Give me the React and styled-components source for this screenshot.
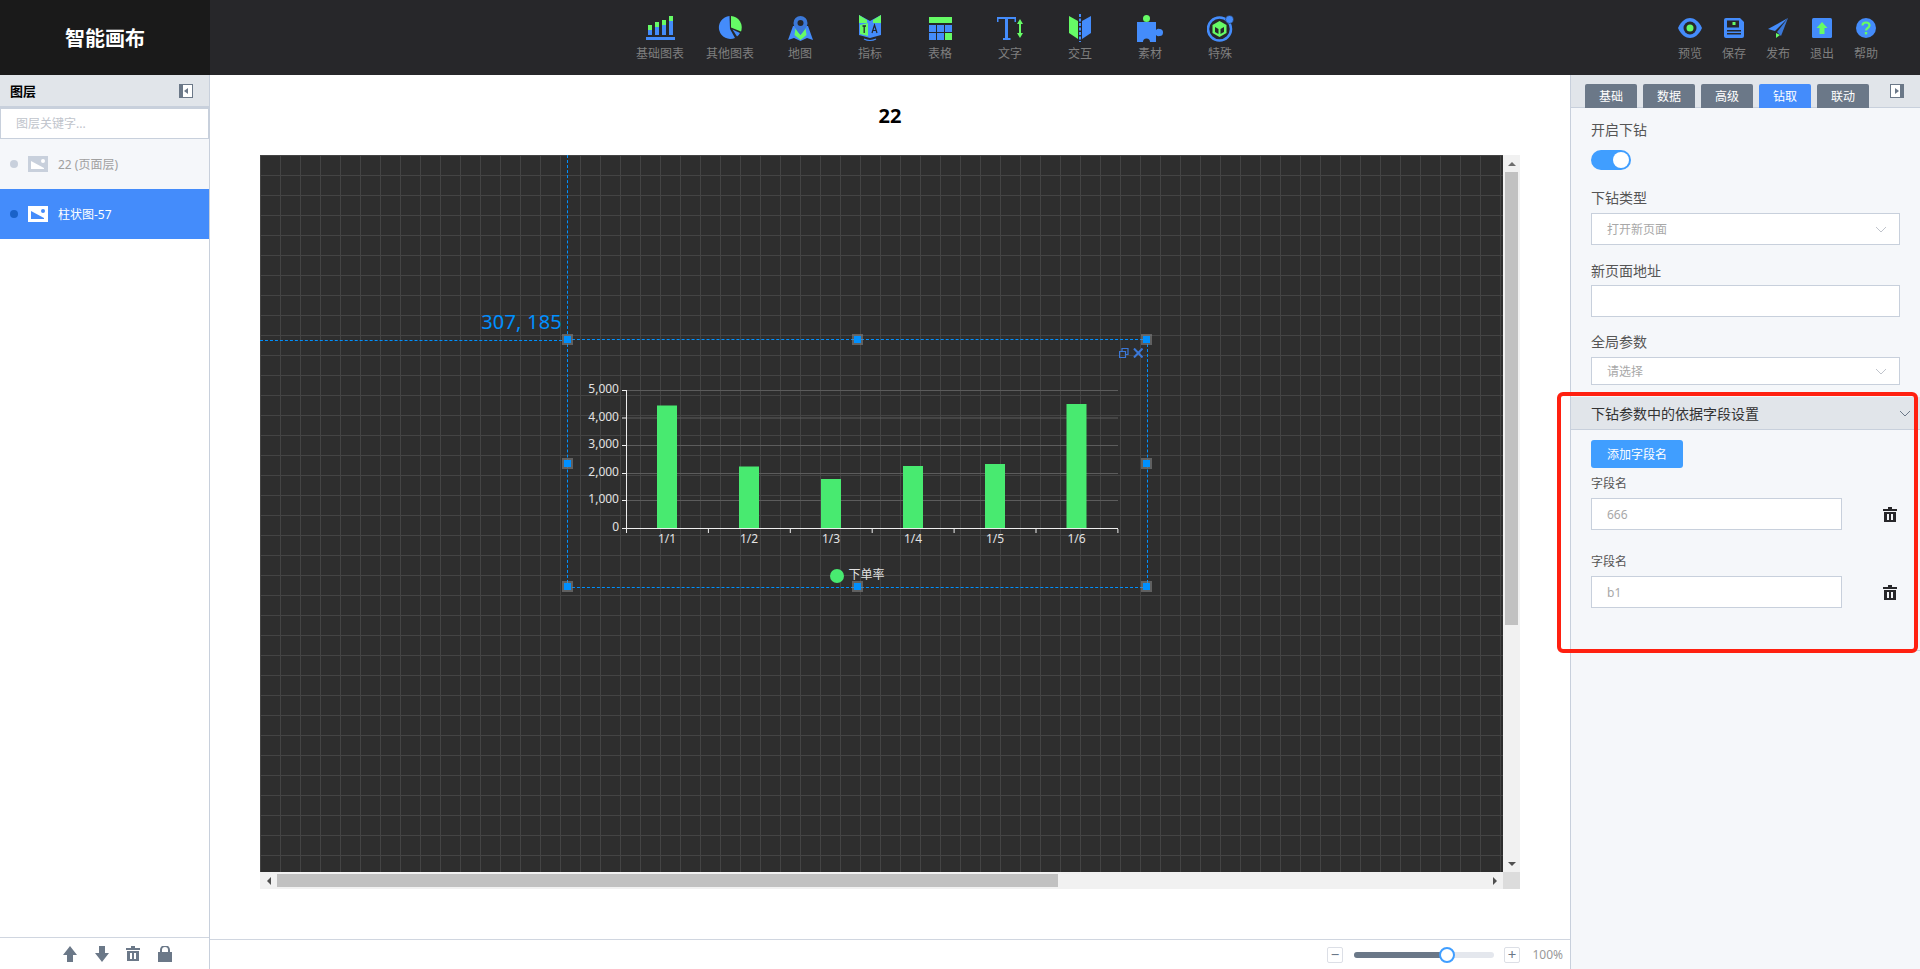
import React from "react";
import styled, { createGlobalStyle } from "styled-components";

const BLUE = "#448cfb";
const GREEN = "#66fb66";

const IconBase = () => (
  <svg width="29" height="24" viewBox="0 0 29 24">
    {[[2, 9], [9, 6], [16, 4], [23, 0]].map(([x, top]) => (
      <g key={x}>
        <rect x={x} y={top} width="4" height="5" fill={GREEN} />
        <rect x={x} y={top + 5} width="4" height={14 - top} fill={BLUE} />
      </g>
    ))}
    <rect x="0" y="21" width="29" height="3" fill={BLUE} />
  </svg>
);

const IconPie = () => (
  <svg width="24" height="24" viewBox="0 0 24 24">
    <path d="M11.5 0 A11.5 11.5 0 1 0 17 22 L12 13 Z" fill={BLUE} />
    <path d="M13 0 A11.5 11.5 0 0 1 23 15.5 L13 11.5 Z" fill={GREEN} />
    <path d="M14.5 13.5 L22 17 A11.5 11.5 0 0 1 19 20.5 Z" fill={BLUE} />
  </svg>
);

const IconMap = () => (
  <svg width="25" height="25" viewBox="0 0 25 25">
    <path d="M5 10 L0 24 L6 22 L12.5 25 L19 22 L25 24 L20 10 L17 10 L12.5 18 L8 10 Z" fill={BLUE} />
    <path d="M7.5 12 L12.5 19 L17.5 12 L18.5 19 L12.5 24 L6.5 19 Z" fill={GREEN} />
    <path d="M12.5 0 A7 7 0 0 1 19.5 7 C19.5 11 15 16 12.5 19 C10 16 5.500 11 5.500 7 A7 7 0 0 1 12.5 0 Z" fill="#3b78d8" />
    <circle cx="12.5" cy="7" r="3" fill="#27272a" />
  </svg>
);

const IconBook = () => (
  <svg width="22" height="27" viewBox="0 0 22 27">
    <path d="M0 0 L11 6 L22 0 L22 20 L11 23 L0 20 Z" fill={BLUE} />
    <path d="M0 0 L8 5 L8 8 L0 8 Z M22 0 L14 5 L14 8 L22 8 Z" fill={GREEN} />
    <path d="M1 10 L9 8 L9 21 L1 19 Z" fill={GREEN} />
    <path d="M3.500 11 H7 M5.200 11 V18" stroke="#27272a" strokeWidth="1.300" fill="none" />
    <path d="M13 18 L15.500 10 L18 18 M14 15.500 H17" stroke="#27272a" strokeWidth="1.200" fill="none" />
    <path d="M5 24 Q11 27 17 24" stroke={BLUE} strokeWidth="1.200" fill="none" />
  </svg>
);

const IconTable = () => (
  <svg width="23" height="23" viewBox="0 0 23 23">
    <rect x="0" y="0" width="23" height="6" fill={GREEN} />
    {[0, 8, 16].map((x) =>
      [8, 16].map((y) => (
        <rect key={x + "-" + y} x={x} y={y} width="7" height="7" fill={x === 16 && y === 16 ? GREEN : BLUE} />
      ))
    )}
  </svg>
);

const IconText = () => (
  <svg width="26" height="23" viewBox="0 0 26 23">
    <path d="M0 0 H19 V5 H17.500 V2 H11 V21 H13.500 V23 H6 V21 H8 V2 H1.500 V5 H0 Z" fill={BLUE} />
    <path d="M23 2 L26 7 H24 V16 H26 L23 21 L20 16 H22 V7 H20 Z" fill={GREEN} />
  </svg>
);

const IconOpen = () => (
  <svg width="22" height="28" viewBox="0 0 22 28">
    <path d="M0 2 L9 7 V25 L0 19 Z" fill={GREEN} />
    <path d="M22 2 L13 7 V25 L22 19 Z" fill={BLUE} />
    <path d="M11 0 V28" stroke={BLUE} strokeWidth="2" strokeDasharray="3 1.500" />
  </svg>
);

const IconPuzzle = () => (
  <svg width="26" height="27" viewBox="0 0 26 27">
    <circle cx="9.500" cy="3.500" r="3.500" fill={GREEN} />
    <path d="M0 7 H19 V15 A3.500 3.500 0 1 1 19 20 V27 H13 A3.500 3.500 0 1 0 6 27 H0 Z" fill={BLUE} />
    <circle cx="22.500" cy="17.500" r="3.500" fill={BLUE} />
  </svg>
);

const IconSpecial = () => (
  <svg width="27" height="27" viewBox="0 0 27 27">
    <circle cx="12.500" cy="14" r="11.500" fill="none" stroke={BLUE} strokeWidth="2.500" />
    <circle cx="22.500" cy="4.500" r="4" fill={BLUE} stroke="#27272a" strokeWidth="0.500" />
    <path d="M12.500 6 L19.500 10 V18 L12.500 22 L5.500 18 V10 Z" fill={GREEN} />
    <path d="M8 12 L11.500 14 V19 L8 17 Z M17 12 L13.500 14 V19 L17 17 Z" fill="#27272a" />
  </svg>
);

const IconEye = () => (
  <svg width="24" height="20" viewBox="0 0 24 20">
    <path d="M0 10 C3 3 8 0 12 0 C16 0 21 3 24 10 C21 17 16 20 12 20 C8 20 3 17 0 10 Z" fill={BLUE} />
    <circle cx="12" cy="10" r="6.500" fill="#27272a" />
    <circle cx="12" cy="10" r="3.500" fill={GREEN} />
  </svg>
);

const IconSave = () => (
  <svg width="20" height="20" viewBox="0 0 20 20">
    <path d="M2 0 H16 L20 4 V18 A2 2 0 0 1 18 20 H2 A2 2 0 0 1 0 18 V2 A2 2 0 0 1 2 0 Z" fill={BLUE} />
    <rect x="3" y="2.500" width="12" height="7" fill="#27272a" />
    <rect x="8.500" y="4" width="3" height="3" fill={GREEN} />
    <rect x="3" y="12" width="14" height="1.500" fill="#27272a" />
    <rect x="3" y="15" width="14" height="1.500" fill="#27272a" />
  </svg>
);

const IconSend = () => (
  <svg width="20" height="20" viewBox="0 0 20 20">
    <path d="M20 0 L0 11 L7 13 Z" fill={BLUE} />
    <path d="M20 0 L9 14 L13 18 Z" fill="#3b78d8" />
    <path d="M8 15 L12 17 L8 20 Z" fill={GREEN} />
  </svg>
);

const IconUp = () => (
  <svg width="20" height="20" viewBox="0 0 20 20">
    <rect width="20" height="20" rx="1.500" fill={BLUE} />
    <path d="M10 4 L15.500 10 H12.500 V16 H7.500 V10 H4.500 Z" fill={GREEN} />
  </svg>
);

const IconHelp = () => (
  <svg width="20" height="20" viewBox="0 0 20 20">
    <circle cx="10" cy="10" r="10" fill={BLUE} />
    <path d="M6.500 7.500 C6.500 3.500 13.500 3.500 13.500 7.500 C13.500 10 10 10 10 12.500" fill="none" stroke={GREEN} strokeWidth="2.200" />
    <rect x="8.800" y="14" width="2.400" height="2.400" fill={GREEN} />
  </svg>
);

const navItems = [
  { label: "基础图表", Icon: IconBase },
  { label: "其他图表", Icon: IconPie },
  { label: "地图", Icon: IconMap },
  { label: "指标", Icon: IconBook },
  { label: "表格", Icon: IconTable },
  { label: "文字", Icon: IconText },
  { label: "交互", Icon: IconOpen },
  { label: "素材", Icon: IconPuzzle },
  { label: "特殊", Icon: IconSpecial },
];

const actionItems = [
  { label: "预览", Icon: IconEye },
  { label: "保存", Icon: IconSave },
  { label: "发布", Icon: IconSend },
  { label: "退出", Icon: IconUp },
  { label: "帮助", Icon: IconHelp },
];

const tabs = ["基础", "数据", "高级", "钻取", "联动"];

const GRAY = "#6b7888";

const ArrowUp = ({ down }) => (
  <svg width="14" height="16" viewBox="0 0 14 16">
    <path d={down ? "M4 0 H10 V7 H14 L7 16 L0 7 H4 Z" : "M7 0 L14 9 H10 V16 H4 V9 H0 Z"} fill={GRAY} />
  </svg>
);

const Trash = ({ color = GRAY, width = 14, height = 15 }) => (
  <svg width={width} height={height} viewBox="0 0 14 15">
    <path d="M5 0 H9 V2 H14 V4 H0 V2 H5 Z" fill={color} />
    <path d="M1 5 H13 V15 H1 Z M4 7 V13 H6 V7 Z M8 7 V13 H10 V7 Z" fill={color} fillRule="evenodd" />
  </svg>
);

const Lock = () => (
  <svg width="14" height="16" viewBox="0 0 14 16">
    <path d="M0 6 H2 V4 A4 4 0 0 1 12 4 V6 H14 V16 H0 Z M4 6 H10 V4 A3 3 0 0 0 4 4 Z" fill={GRAY} fillRule="evenodd" />
  </svg>
);

const Collapse = ({ right }) => (
  <svg width="14" height="14" viewBox="0 0 14 14">
    <rect x="0.500" y="0.500" width="13" height="13" fill="#fff" stroke={GRAY} />
    <rect x={right ? 10 : 0} y="0" width="4" height="14" fill={GRAY} />
    <path d={right ? "M5 4 L9 7 L5 10 Z" : "M9 4 L5 7 L9 10 Z"} fill={GRAY} />
  </svg>
);

const PictureIcon = ({ bg, fg }) => (
  <svg width="20" height="16" viewBox="0 0 20 16">
    <rect width="20" height="16" fill={bg} />
    <path d="M3 5 L16 12 V13 H3 Z" fill={fg} />
    <circle cx="15" cy="5" r="2" fill={fg} />
  </svg>
);

const Chevron = () => (
  <svg width="12" height="7" viewBox="0 0 12 7">
    <path d="M1 1 L6 6 L11 1" fill="none" stroke="#c0c4cc" strokeWidth="1" />
  </svg>
);

// chart coordinates are relative to the selection box
const yTicks = [
  { label: "5,000", y: 51 },
  { label: "4,000", y: 78.5 },
  { label: "3,000", y: 106 },
  { label: "2,000", y: 134 },
  { label: "1,000", y: 161 },
  { label: "0", y: 189 },
];

const bars = [
  { label: "1/1", x: 100, top: 66.500 },
  { label: "1/2", x: 182, top: 127.500 },
  { label: "1/3", x: 264, top: 140 },
  { label: "1/4", x: 346, top: 127 },
  { label: "1/5", x: 428, top: 125 },
  { label: "1/6", x: 509.500, top: 65 },
];

function BarChart() {
  return (
    <ChartSvg width="581" height="249" viewBox="0 0 581 249">
      {yTicks.slice(0, 5).map((t) => (
        <line key={t.label} x1="60" x2="551" y1={t.y + 0.5} y2={t.y + 0.5} stroke="#5c5c5c" />
      ))}
      {yTicks.map((t) => (
        <g key={t.label}>
          <line x1="55" x2="60" y1={t.y + 0.5} y2={t.y + 0.5} stroke="#eee" />
          <text x="52" y={t.y + 3} textAnchor="end" fontSize="12" fill="#e2e2e2">{t.label}</text>
        </g>
      ))}
      {bars.map((b) => (
        <g key={b.label}>
          <rect x={b.x - 10} y={b.top} width="20" height={189 - b.top} fill="#48ea70" />
          <text x={b.x} y="204" textAnchor="middle" fontSize="12" fill="#e2e2e2">{b.label}</text>
        </g>
      ))}
      <line x1="59.500" x2="59.500" y1="51" y2="194" stroke="#eee" />
      <line x1="59.500" x2="551" y1="189.500" y2="189.500" stroke="#eee" />
      {[0, 1, 2, 3, 4, 5, 6].map((i) => (
        <line key={i} x1={59.5 + i * 81.9} x2={59.5 + i * 81.9} y1="190" y2="194" stroke="#eee" />
      ))}
      <circle cx="270" cy="237" r="7" fill="#48ea70" />
      <text x="281.500" y="240" fontSize="12" fill="#e2e2e2">下单率</text>
    </ChartSvg>
  );
}

function App() {
  return (
    <Page>
      <GlobalStyle />
      <Header>
        <Logo>智能画布</Logo>
        <Nav>
          {navItems.map(({ label, Icon }) => (
            <NavItem key={label} $width={70}>
              <NavIcon><Icon /></NavIcon>
              <span>{label}</span>
            </NavItem>
          ))}
        </Nav>
        <Actions>
          {actionItems.map(({ label, Icon }) => (
            <NavItem key={label} $width={44}>
              <NavIcon><Icon /></NavIcon>
              <span>{label}</span>
            </NavItem>
          ))}
        </Actions>
      </Header>

      <Body>
        <LeftPanel>
          <LayerHead>
            <strong>图层</strong>
            <Collapse />
          </LayerHead>
          <LayerSearch placeholder="图层关键字..." readOnly />
          <LayerRow>
            <LayerDot $color="#c8d0dc" />
            <PictureIcon bg="#c8d0dc" fg="#fff" />
            <span>22 (页面层)</span>
          </LayerRow>
          <LayerRow $active>
            <LayerDot $color="#1a62c8" />
            <PictureIcon bg="#fff" fg={BLUE} />
            <span>柱状图-57</span>
          </LayerRow>
          <LayerFooter>
            <ArrowUp />
            <ArrowUp down />
            <Trash />
            <Lock />
          </LayerFooter>
        </LeftPanel>

        <Main>
          <Title>22</Title>
          <CanvasFrame>
            <CanvasRow>
              <Canvas>
                <GuideV />
                <GuideH />
                <Coords>307, 185</Coords>
                <Selection>
                  <BarChart />
                  <SelectionTools>
                    <svg width="24" height="10" viewBox="0 0 24 10">
                      <path d="M0.500 3.500 H6.500 V9.500 H0.500 Z M3 3 V0.500 H9 V6.500 H7" fill="none" stroke="#3b78d8" strokeWidth="1.200" />
                      <path d="M15 0.500 L23.500 9.500 M23.500 0.500 L15 9.500" stroke="#3b78d8" strokeWidth="2" />
                    </svg>
                  </SelectionTools>
                  {[0, 50, 100].map((left) =>
                    [0, 50, 100].map((top) =>
                      left === 50 && top === 50 ? null : (
                        <Handle key={left + "-" + top} $left={left} $top={top} />
                      )
                    )
                  )}
                </Selection>
              </Canvas>
              <VScroll>
                <ScrollEnd><Tri $dir="up" /></ScrollEnd>
                <VTrack><VThumb /></VTrack>
                <ScrollEnd><Tri $dir="down" /></ScrollEnd>
              </VScroll>
            </CanvasRow>
            <HScroll>
              <ScrollEnd><Tri $dir="left" /></ScrollEnd>
              <HTrack><HThumb /></HTrack>
              <ScrollEnd><Tri $dir="right" /></ScrollEnd>
              <ScrollCorner />
            </HScroll>
          </CanvasFrame>
          <ZoomBar>
            <ZoomButton>−</ZoomButton>
            <ZoomTrack>
              <ZoomFill />
              <ZoomThumb />
            </ZoomTrack>
            <ZoomButton>+</ZoomButton>
            <ZoomValue>100%</ZoomValue>
          </ZoomBar>
        </Main>

        <RightPanel>
          <TabBar>
            {tabs.map((t) => (
              <Tab key={t} $active={t === "钻取"}>{t}</Tab>
            ))}
            <TabCollapse><Collapse right /></TabCollapse>
          </TabBar>
          <Form>
            <FieldLabel>开启下钻</FieldLabel>
            <Toggle><Knob /></Toggle>
            <FieldLabel>下钻类型</FieldLabel>
            <SelectBox $bottom={16}>打开新页面<Chevron /></SelectBox>
            <FieldLabel $gap={4}>新页面地址</FieldLabel>
            <SelectBox $bottom={15} />
            <FieldLabel>全局参数</FieldLabel>
            <SelectBox $height={28}>请选择<Chevron /></SelectBox>
          </Form>
          <SectionHead>
            下钻参数中的依据字段设置
            <Chevron />
          </SectionHead>
          <SectionBody>
            <AddButton>添加字段名</AddButton>
            <SubLabel $top={8}>字段名</SubLabel>
            <ParamRow>
              <ParamInput>666</ParamInput>
              <Trash color="#27272a" />
            </ParamRow>
            <SubLabel $top={24}>字段名</SubLabel>
            <ParamRow>
              <ParamInput>b1</ParamInput>
              <Trash color="#27272a" />
            </ParamRow>
          </SectionBody>
          <RedMark />
        </RightPanel>
      </Body>
    </Page>
  );
}

export default App;

const GlobalStyle = createGlobalStyle`
  * {
    box-sizing: border-box;
  }
  body {
    margin: 0;
    font-family: "Noto Sans", "Noto Sans CJK SC", sans-serif;
    font-size: 12px;
    background: #fff;
  }
`;

const Page = styled.div`
  height: 100vh;
  display: flex;
  flex-direction: column;
  overflow: hidden;
`;

const Header = styled.header`
  height: 75px;
  flex: none;
  display: flex;
  background: #27272a;
`;

const Logo = styled.div`
  width: 210px;
  display: flex;
  align-items: center;
  justify-content: center;
  background: #1a1a1a;
  color: #fff;
  font-size: 20px;
  font-weight: 700;
`;

const Nav = styled.nav`
  flex: 1;
  display: flex;
  justify-content: center;
  padding-left: 2px;
`;

const Actions = styled.div`
  display: flex;
  padding-right: 32px;
`;

const NavItem = styled.div`
  width: ${(p) => p.$width}px;
  display: flex;
  flex-direction: column;
  align-items: center;
  padding-top: 14px;
  color: #7f7f7f;
  font-size: 12px;
  line-height: 16px;
`;

const NavIcon = styled.div`
  height: 28px;
  margin-bottom: 4px;
  display: flex;
  align-items: center;
  justify-content: center;
`;

const Body = styled.div`
  flex: 1;
  min-height: 0;
  display: flex;
`;

const LeftPanel = styled.aside`
  width: 210px;
  flex: none;
  display: flex;
  flex-direction: column;
  border-right: 1px solid #c8d0dc;
`;

const LayerHead = styled.div`
  height: 33px;
  flex: none;
  display: flex;
  align-items: center;
  justify-content: space-between;
  padding: 0 16px 0 10px;
  background: #e1e5ea;
  border-bottom: 2px solid #c8d0dc;
  color: #000;
  font-size: 13px;
`;

const LayerSearch = styled.input`
  height: 31px;
  flex: none;
  width: 100%;
  padding: 0 15px;
  border: 1px solid #c8d0dc;
  outline: none;
  font-family: inherit;
  font-size: 12px;

  &::placeholder {
    color: #c0c4cc;
  }
`;

const LayerRow = styled.div`
  height: 50px;
  flex: none;
  display: flex;
  align-items: center;
  padding-left: 10px;
  background: ${(p) => (p.$active ? "#448cfb" : "#f5f7fa")};
  color: ${(p) => (p.$active ? "#fff" : "#a0a0a0")};

  > svg {
    margin: 0 10px 0 10px;
  }
`;

const LayerDot = styled.i`
  width: 8px;
  height: 8px;
  border-radius: 50%;
  background: ${(p) => p.$color};
`;

const LayerFooter = styled.div`
  margin-top: auto;
  height: 32px;
  flex: none;
  display: flex;
  align-items: center;
  gap: 17.5px;
  padding-left: 63px;
  border-top: 1px solid #d0d6e0;
`;

const Main = styled.main`
  flex: 1;
  min-width: 0;
  display: flex;
  flex-direction: column;
`;

const Title = styled.h1`
  height: 80px;
  flex: none;
  margin: 0;
  display: flex;
  align-items: center;
  justify-content: center;
  color: #000;
  font-size: 20px;
  font-weight: 700;
`;

const CanvasFrame = styled.div`
  margin: 0 50px;
  display: flex;
  flex-direction: column;
`;

const CanvasRow = styled.div`
  height: 717px;
  display: flex;
`;

const Canvas = styled.div`
  position: relative;
  flex: 1;
  overflow: hidden;
  background-color: #2e2e2e;
  background-image: linear-gradient(#444 1px, transparent 1px),
    linear-gradient(90deg, #444 1px, transparent 1px);
  background-size: 20px 20px;
`;

const GuideV = styled.div`
  position: absolute;
  left: 307px;
  top: 0;
  height: 184px;
  border-left: 1px dashed #0090ff;
`;

const GuideH = styled.div`
  position: absolute;
  left: 0;
  top: 185px;
  width: 307px;
  border-top: 1px dashed #0090ff;
`;

const Coords = styled.div`
  position: absolute;
  right: calc(100% - 302px);
  top: 153px;
  color: #0090ff;
  font-size: 20px;
  letter-spacing: 0.2px;
  line-height: 28px;
  white-space: nowrap;
`;

const Selection = styled.div`
  position: absolute;
  left: 307px;
  top: 184px;
  width: 581px;
  height: 249px;
  border: 1px dashed #0090ff;
`;

const ChartSvg = styled.svg`
  position: absolute;
  left: -1px;
  top: -1px;
  font-family: "Noto Sans", "Noto Sans CJK SC", sans-serif;
`;

const SelectionTools = styled.div`
  position: absolute;
  right: 4px;
  top: 8px;
  display: flex;
`;

const Handle = styled.i`
  position: absolute;
  left: ${(p) => p.$left}%;
  top: ${(p) => p.$top}%;
  width: 7px;
  height: 7px;
  margin: -4px 0 0 -4px;
  background: #0090ff;
  box-shadow: 0 0 0 2px rgba(130, 130, 130, 0.6);
`;

const VScroll = styled.div`
  width: 17px;
  flex: none;
  display: flex;
  flex-direction: column;
  background: #f1f1f1;
`;

const ScrollEnd = styled.div`
  width: 17px;
  height: 17px;
  flex: none;
  display: flex;
  align-items: center;
  justify-content: center;
`;

const triangles = {
  up: "border-width: 0 4px 4px; border-color: transparent transparent #6e6e6e;",
  down: "border-width: 4px 4px 0; border-color: #505050 transparent transparent;",
  left: "border-width: 4px 4px 4px 0; border-color: transparent #505050 transparent transparent;",
  right: "border-width: 4px 0 4px 4px; border-color: transparent transparent transparent #505050;",
};

const Tri = styled.i`
  width: 0;
  height: 0;
  border-style: solid;
  ${(p) => triangles[p.$dir]}
`;

const VTrack = styled.div`
  flex: 1;
  padding: 0 2px;
`;

const VThumb = styled.div`
  height: 453px;
  background: #c1c1c1;
`;

const HScroll = styled.div`
  height: 17px;
  display: flex;
  background: #f1f1f1;
`;

const HTrack = styled.div`
  flex: 1;
  padding: 2px 0;
`;

const HThumb = styled.div`
  width: 781px;
  height: 13px;
  background: #c1c1c1;
`;

const ScrollCorner = styled.div`
  width: 17px;
  flex: none;
  background: #dcdcdc;
`;

const ZoomBar = styled.div`
  margin-top: auto;
  height: 30px;
  flex: none;
  display: flex;
  align-items: center;
  justify-content: flex-end;
  padding-right: 7px;
  border-top: 1px solid #d0d6e0;
`;

const ZoomButton = styled.div`
  width: 16px;
  height: 16px;
  display: flex;
  align-items: center;
  justify-content: center;
  border: 1px solid #dcdfe6;
  border-radius: 2px;
  color: #6b7888;
  font-size: 15px;
  line-height: 1;
`;

const ZoomTrack = styled.div`
  position: relative;
  width: 140px;
  height: 6px;
  margin: 0 10px 0 11px;
  border-radius: 3px;
  background: #e4e7ed;
`;

const ZoomFill = styled.div`
  width: 93px;
  height: 100%;
  border-radius: 3px;
  background: #6b7888;
`;

const ZoomThumb = styled.i`
  position: absolute;
  left: 85px;
  top: -5px;
  width: 16px;
  height: 16px;
  border: 2px solid #409eff;
  border-radius: 50%;
  background: #fff;
`;

const ZoomValue = styled.div`
  width: 36px;
  margin-left: 7px;
  color: #999;
  font-size: 12px;
  text-align: right;
  white-space: nowrap;
`;

const RightPanel = styled.aside`
  position: relative;
  width: 350px;
  flex: none;
  border-left: 1px solid #c8d0dc;
  background: #f5f7fa;
`;

const TabBar = styled.div`
  height: 33px;
  display: flex;
  align-items: flex-end;
  gap: 6px;
  padding-left: 14px;
  background: #e1e5ea;
  border-bottom: 1px solid #c8d0dc;
`;

const Tab = styled.div`
  width: 52px;
  height: 24px;
  margin-bottom: -1px;
  display: flex;
  align-items: center;
  justify-content: center;
  border-radius: 2px 2px 0 0;
  background: ${(p) => (p.$active ? "#448cfb" : "#6b7888")};
  color: #fff;
  font-size: 12px;
`;

const TabCollapse = styled.div`
  align-self: flex-start;
  margin: 9px 0 0 15px;
  line-height: 0;
`;

const Form = styled.div`
  padding: 12px 20px 12px;
`;

const FieldLabel = styled.div`
  margin-bottom: ${(p) => p.$gap || 5}px;
  color: #555;
  font-size: 14px;
  line-height: 20px;
`;

const Toggle = styled.div`
  width: 40px;
  height: 20px;
  margin: 10px 0 18px;
  padding: 2px;
  display: flex;
  justify-content: flex-end;
  border-radius: 10px;
  background: #409eff;
`;

const Knob = styled.i`
  width: 16px;
  height: 16px;
  border-radius: 50%;
  background: #fff;
`;

const SelectBox = styled.div`
  width: 309px;
  height: ${(p) => p.$height || 32}px;
  display: flex;
  align-items: center;
  justify-content: space-between;
  padding: 0 12px 0 15px;
  margin-bottom: ${(p) => p.$bottom || 0}px;
  border: 1px solid #c8d0dc;
  background: #fff;
  color: #a8a8a8;
  font-size: 12px;
`;

const SectionHead = styled.div`
  height: 33px;
  display: flex;
  align-items: center;
  justify-content: space-between;
  padding: 0 9px 0 20px;
  background: #e1e5ea;
  border-bottom: 1px solid #c8d0dc;
  color: #333;
  font-size: 14px;

  svg path {
    stroke: #6b7888;
  }
`;

const SectionBody = styled.div`
  height: 221px;
  padding: 10px 20px 0;
  border-bottom: 1px solid #c8d0dc;
`;

const AddButton = styled.button`
  display: block;
  width: 92px;
  height: 28px;
  padding: 0;
  border: none;
  border-radius: 3px;
  background: #409eff;
  color: #fff;
  font-family: inherit;
  font-size: 12px;
`;

const SubLabel = styled.div`
  margin-top: ${(p) => p.$top}px;
  margin-bottom: 6px;
  color: #555;
  font-size: 12px;
  line-height: 16px;
`;

const ParamRow = styled.div`
  display: flex;
  align-items: center;
  gap: 41px;
`;

const ParamInput = styled.div`
  width: 251px;
  height: 32px;
  display: flex;
  align-items: center;
  padding: 0 15px;
  border: 1px solid #c8d0dc;
  background: #fff;
  color: #a8a8a8;
  font-size: 12px;
`;

const RedMark = styled.div`
  position: absolute;
  left: -14px;
  top: 317px;
  width: 361px;
  height: 261px;
  border: 4px solid #ff2010;
  border-radius: 6px;
  pointer-events: none;
`;
